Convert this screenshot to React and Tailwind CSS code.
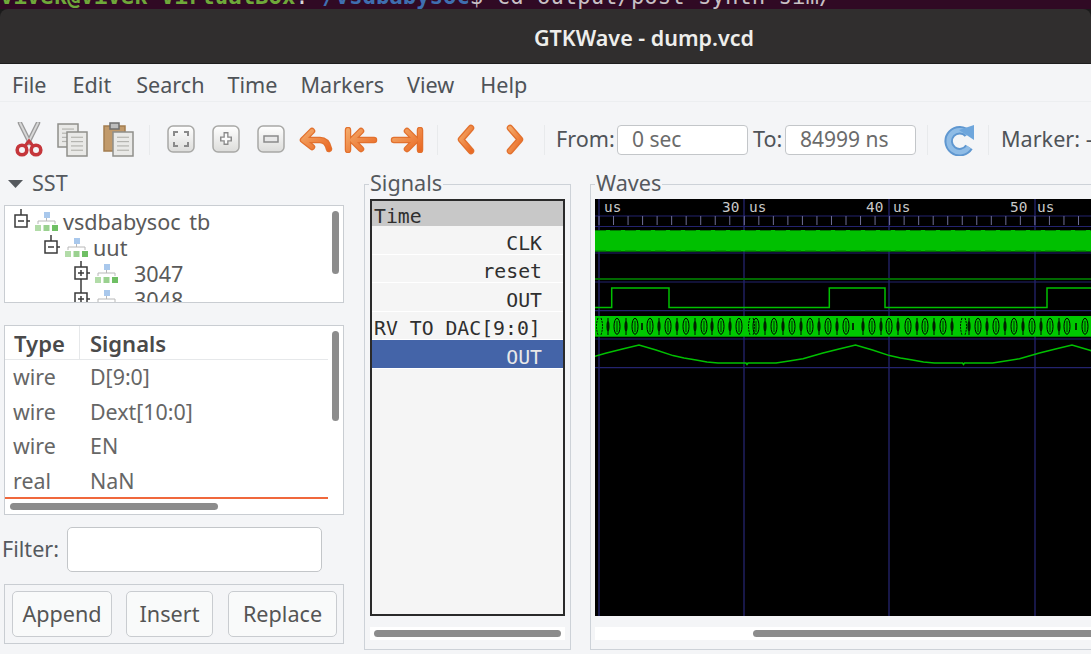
import React from "react";

const periodOffsets = [[0,345],[17,350],[34,355.6],[45,358],[57,360],[68,362],[79,363],[107,363],[108,364.5],[109,363],[137,363],[150,361],[164,358.7],[184,353],[200,349],[216.5,345]];
const analogPoints = [422.5, 639, 855.5, 1072]
  .flatMap((p) => periodOffsets.map(([o, y]) => `${p + o},${y}`))
  .join(" ");
const majors = [599, 744, 889, 1035];
const ticks = Array.from({ length: 35 }, (_, i) => 599 + i * 14.53);
const rowLines = [216, 226.5, 253, 282, 310.7, 339, 367.7];

const wideBits = [617, 635, 650, 668, 686, 704, 721, 739, 756, 774, 792, 810, 828, 846, 872, 889, 908, 925, 943, 978, 996, 1014, 1032, 1050, 1067, 1085];
const narrowBits = [608, 626, 659, 677, 695, 712, 730, 765, 783, 801, 819, 837, 863, 881, 898, 917, 934, 952, 969, 987, 1005, 1023, 1041, 1059];
const tinyBits = [642, 853, 1076];
const oddBits = [598, 750, 962];

function Tree({ sign, bottom }) {
  return (
    <svg width="18" height="26" viewBox="0 0 18 26" className="shrink-0">
      <g stroke="#3a3a3a" strokeWidth="1.5" fill="none">
        <path d="M8 0V6" />
        {bottom && <path d="M8 18V26" />}
        <rect x="2" y="6" width="12" height="12" fill="#fff" />
        <path d="M14 12H17" />
        <path d="M5 12H11" />
        {sign === "+" && <path d="M8 9V15" />}
      </g>
    </svg>
  );
}

function Hier() {
  return (
    <svg width="25" height="24" viewBox="0 0 25 24" className="shrink-0">
      <rect x="10" y="2" width="6" height="6" fill="#a9c8ec" />
      <path d="M4 14V11H21V14M12.5 8V11" stroke="#b8b8b8" fill="none" />
      <rect x="1" y="15" width="6" height="6" fill="#b2dca8" />
      <rect x="9.5" y="15" width="6" height="6" fill="#9ad18f" />
      <rect x="18" y="15" width="6" height="6" fill="#6fbf64" />
    </svg>
  );
}

function Scissors() {
  return (
    <svg width="28" height="35" viewBox="0 0 28 35">
      <path d="M5 1L15 21M23 1L13 21" stroke="#9a9a9a" strokeWidth="4.5" strokeLinecap="round" />
      <path d="M5 1L15 21M23 1L13 21" stroke="#d8d8d8" strokeWidth="1.8" strokeLinecap="round" />
      <circle cx="7" cy="28" r="4.8" fill="none" stroke="#c5363b" strokeWidth="3.6" />
      <circle cx="21" cy="28" r="4.8" fill="none" stroke="#c5363b" strokeWidth="3.6" />
      <path d="M10 24L14 19L18 24" fill="none" stroke="#c5363b" strokeWidth="3" />
    </svg>
  );
}

function Doc({ x, y, w, h }) {
  return (
    <g>
      <rect x={x} y={y} width={w} height={h} fill="#e9e9e7" stroke="#8f8f8b" strokeWidth="1.5" />
      {[0.22, 0.4, 0.58, 0.76].map((f) => (
        <path key={f} d={`M${x + 4} ${y + h * f}H${x + w - 4}`} stroke="#b4b4b0" strokeWidth="1.2" />
      ))}
    </g>
  );
}

function Copy() {
  return (
    <svg width="31" height="34" viewBox="0 0 31 34">
      <Doc x={1} y={1} w={20} h={23} />
      <Doc x={10} y={9} w={20} h={24} />
    </svg>
  );
}

function Paste() {
  return (
    <svg width="31" height="35" viewBox="0 0 31 35">
      <rect x="1" y="4" width="21" height="25" fill="#c19a6b" stroke="#a37d50" strokeWidth="1.5" />
      <rect x="7" y="1" width="9" height="6" fill="#bdbdbd" stroke="#6f6f6f" strokeWidth="1.5" />
      <Doc x={10} y={10} w={20} h={24} />
    </svg>
  );
}

function SquareBtn({ children }) {
  return (
    <svg width="28" height="29" viewBox="0 0 28 29">
      <defs>
        <linearGradient id="sq" x1="0" y1="0" x2="0" y2="1">
          <stop offset="0" stopColor="#ffffff" />
          <stop offset="1" stopColor="#dcdcda" />
        </linearGradient>
      </defs>
      <rect x="1" y="1" width="26" height="26" rx="5" fill="url(#sq)" stroke="#a8a8a6" strokeWidth="1.5" />
      {children}
    </svg>
  );
}

function Thick({ d, w = 34, h = 26 }) {
  return (
    <svg width={w} height={h} viewBox={`0 0 ${w} ${h}`}>
      <defs>
        <linearGradient id="org" x1="0" y1="0" x2="1" y2="1">
          <stop offset="0" stopColor="#f3a868" />
          <stop offset="1" stopColor="#ea6a25" />
        </linearGradient>
      </defs>
      <path d={d} fill="none" stroke="#e2712e" strokeWidth="6.5" strokeLinecap="round" strokeLinejoin="round" />
      <path d={d} fill="none" stroke="url(#org)" strokeWidth="4" strokeLinecap="round" strokeLinejoin="round" />
    </svg>
  );
}

function Reload() {
  return (
    <svg width="31" height="32" viewBox="0 0 31 32">
      <path d="M24 10A11 11 0 1 0 25 23" fill="none" stroke="#5f97d0" strokeWidth="8.5" />
      <path d="M24 10A11 11 0 1 0 25 23" fill="none" stroke="#8fbce6" strokeWidth="4.5" />
      <path d="M15 6L30 1V16Z" fill="#6ea6dc" />
    </svg>
  );
}

function Sep() {
  return <div className="w-px h-[30px] bg-[#e8eaec] shrink-0" />;
}

function TimeInput({ value }) {
  return (
    <div className="w-[131px] h-[30px] shrink-0 rounded-[4px] border border-[#c3c6c9] bg-white pl-[14px] text-[21px] leading-[27px] text-[#6b6b6b]">
      {value}
    </div>
  );
}

function ScrollThumb({ className }) {
  return <div className={`rounded-full bg-[#8c8c8c] ${className}`} />;
}

function SignalRow({ children, left, selected }) {
  return (
    <div
      className={`h-[28.5px] shrink-0 border-b border-white flex items-center pt-[8px] ${left ? "pl-[2px]" : "justify-end pr-[21px]"} ${selected ? "bg-[#4464a8] text-[#e8e8e8]" : "text-[#2f2f2f]"}`}
    >
      {children}
    </div>
  );
}

function Btn({ w, children }) {
  return (
    <div className={`${w} h-[46px] rounded-[5px] border border-[#c9ccd0] bg-[#f9fafa] flex items-center justify-center text-[21.6px] text-[#555555]`}>
      {children}
    </div>
  );
}

function ListRow({ type, name }) {
  return (
    <div className="h-[34.6px] flex items-center text-[21.4px] text-[#666666]">
      <span className="w-[75px] pl-[8px]">{type}</span>
      <span className="pl-[10px]">{name}</span>
    </div>
  );
}

export default function App() {
  return (
    <div className="w-[1091px] h-[654px] overflow-hidden flex flex-col bg-[#1a1a1a] font-['Noto_Sans',sans-serif]">
      <div className="h-[9px] shrink-0 bg-[#300a24] overflow-hidden flex items-start font-['DejaVu_Sans_Mono',monospace] text-[22.3px] leading-[20px] whitespace-pre">
        <div className="flex mt-[-14px]">
          <span className="font-bold text-[#6fa83a]">vivek@vivek-VirtualBox</span>
          <span className="text-[#d8d8d8]">:</span>
          <span className="font-bold text-[#3f6fb0]">~/vsdbabysoc</span>
          <span className="text-[#c8c0c4]">$ cd output/post_synth_sim/</span>
        </div>
      </div>

      <div className="h-[55px] shrink-0 rounded-t-[8px] bg-[#302e2e] border-b border-[#1e1e1e] flex items-center justify-center pl-[197px] pt-[4px] text-[21.5px] font-semibold text-[#eeeeec]">
        GTKWave - dump.vcd
      </div>

      <div className="flex-1 min-h-0 bg-[#f4f5f7] flex flex-col">
        <div className="h-[38px] shrink-0 border-b border-[#eceef0] flex items-center pl-[12px] pt-[5px] text-[21.6px] text-[#4f5358]">
          <span>File</span>
          <span className="ml-[26px]">Edit</span>
          <span className="ml-[25px]">Search</span>
          <span className="ml-[23px]">Time</span>
          <span className="ml-[23px]">Markers</span>
          <span className="ml-[23px]">View</span>
          <span className="ml-[26px]">Help</span>
        </div>

        <div className="h-[66px] shrink-0 flex items-center pl-[15px] pt-[9px] whitespace-nowrap text-[21.6px] text-[#4f5358] [&>*]:shrink-0">
          <Scissors />
          <div className="ml-[14px]"><Copy /></div>
          <div className="ml-[15px]"><Paste /></div>
          <div className="ml-[15px]"><Sep /></div>
          <div className="ml-[17px]">
            <SquareBtn>
              <path d="M11 7H7V11M17 7H21V11M7 17V21H11M21 17V21H17" fill="none" stroke="#8a8a8a" strokeWidth="2" />
            </SquareBtn>
          </div>
          <div className="ml-[17px]">
            <SquareBtn>
              <path d="M14 7V20M8 14H20" stroke="#8a8a8a" strokeWidth="5" />
              <path d="M14 8.5V18.5M9.5 14H18.5" stroke="#fbfbfb" strokeWidth="2.4" />
            </SquareBtn>
          </div>
          <div className="ml-[17px]">
            <SquareBtn>
              <rect x="7" y="11" width="14" height="6" fill="#e8e8e8" stroke="#8a8a8a" strokeWidth="1.5" />
            </SquareBtn>
          </div>
          <div className="ml-[14px]"><Thick d="M4 13L13 4M4 13L13 20M5 13H21Q28 13 30 22" /></div>
          <div className="ml-[11px]"><Thick d="M4 3V23M8 13L17 4M8 13L17 22M8 13H30" /></div>
          <div className="ml-[12px]"><Thick d="M30 3V23M26 13L17 4M26 13L17 22M26 13H4" /></div>
          <div className="ml-[13px]"><Sep /></div>
          <div className="ml-[18px]"><Thick w={19} h={31} d="M15 4L5 15.5L15 27" /></div>
          <div className="ml-[31px]"><Thick w={19} h={31} d="M4 4L14 15.5L4 27" /></div>
          <div className="ml-[19px]"><Sep /></div>
          <span className="ml-[11px] w-[61px]">From:</span>
          <TimeInput value="0 sec" />
          <span className="ml-[5px] w-[32px]">To:</span>
          <TimeInput value="84999 ns" />
          <div className="ml-[11px]"><Sep /></div>
          <div className="ml-[16px]"><Reload /></div>
          <div className="ml-[13px]"><Sep /></div>
          <span className="ml-[12px]">Marker: --</span>
        </div>

        <div className="flex-1 min-h-0 flex pl-[4px]">
          <div className="w-[340px] shrink-0 flex flex-col">
            <div className="h-[37px] shrink-0 flex items-center pl-[4px] pb-[6px] text-[21.6px] text-[#55595e]">
              <svg width="15" height="8" viewBox="0 0 15 8"><path d="M0 0H15L7.5 8Z" fill="#55595e" /></svg>
              <span className="ml-[9px]">SST</span>
            </div>
            <div className="h-[98px] shrink-0 border border-[#c9cdd2] bg-white relative overflow-hidden text-[21.6px] text-[#5a5a5a] leading-none pt-[3px]">
              <div className="h-[26px] flex items-center pl-[8px]">
                <Tree sign="-" />
                <div className="ml-[3px]"><Hier /></div>
                <span className="ml-[4px] [word-spacing:3px]">vsdbabysoc tb</span>
              </div>
              <div className="h-[26px] flex items-center pl-[38px]">
                <Tree sign="-" />
                <div className="ml-[3px]"><Hier /></div>
                <span className="ml-[4px]">uut</span>
              </div>
              <div className="h-[26px] flex items-center pl-[68px]">
                <Tree sign="+" bottom />
                <div className="ml-[3px]"><Hier /></div>
                <span className="ml-[15px]">3047</span>
              </div>
              <div className="h-[26px] flex items-center pl-[68px]">
                <Tree sign="+" bottom />
                <div className="ml-[3px]"><Hier /></div>
                <span className="ml-[15px]">3048</span>
              </div>
              <ScrollThumb className="absolute right-[4px] top-[5px] w-[7px] h-[63px]" />
            </div>

            <div className="mt-[22px] h-[190px] shrink-0 border border-[#c9cdd2] bg-white relative overflow-hidden">
              <div className="h-[34px] w-[323px] border-b border-[#e6e8ea] flex items-center text-[22px] font-semibold text-[#4a4a4a]">
                <span className="w-[75px] h-full pl-[9px] pt-[2px] border-r border-[#e6e8ea] flex items-center">Type</span>
                <span className="pl-[10px] pt-[2px]">Signals</span>
              </div>
              <div className="w-[323px]">
                <ListRow type="wire" name="D[9:0]" />
                <ListRow type="wire" name="Dext[10:0]" />
                <ListRow type="wire" name="EN" />
                <ListRow type="real" name="NaN" />
              </div>
              <div className="w-[323px] h-[2px] mt-[-1px] bg-[#f0683c]" />
              <ScrollThumb className="ml-[5px] mt-[4px] w-[208px] h-[7px]" />
              <ScrollThumb className="absolute right-[4px] top-[5px] w-[7px] h-[90px]" />
            </div>

            <div className="mt-[12px] h-[45px] shrink-0 flex items-center ml-[-2px] text-[21.6px] text-[#55595e]">
              <span className="w-[65px]">Filter:</span>
              <div className="w-[255px] h-[45px] rounded-[5px] border border-[#c3c6c9] bg-white" />
            </div>

            <div className="mt-[12px] h-[60px] shrink-0 border border-[#c9cdd2] flex items-center pl-[7px] gap-[14px]">
              <Btn w="w-[100px]">Append</Btn>
              <Btn w="w-[87px]">Insert</Btn>
              <div className="ml-px"><Btn w="w-[109px]">Replace</Btn></div>
            </div>
          </div>

          <div className="ml-[20px] mt-[16px] mb-[4px] w-[207px] shrink-0 border border-[#cdd2d8] relative pt-[14px] pl-[5px] pr-[5px]">
            <span className="absolute left-[4px] top-[-15px] bg-[#f4f5f7] px-[1px] text-[21.6px] leading-[26px] text-[#55595e]">Signals</span>
            <div className="h-[417px] border-2 border-[#2a2a2a] bg-[#f5f5f5] flex flex-col font-['DejaVu_Sans_Mono',monospace] text-[19.8px] leading-none">
              <div className="h-[25px] shrink-0 bg-[#c8c8c8] flex items-center pl-[2px] pt-[6px] text-[#2f2f2f]">Time</div>
              <SignalRow>CLK</SignalRow>
              <SignalRow>reset</SignalRow>
              <SignalRow>OUT</SignalRow>
              <SignalRow left>RV TO DAC[9:0]</SignalRow>
              <SignalRow selected>OUT</SignalRow>
            </div>
            <div className="mt-[11px] h-[13px] bg-white flex items-center px-[4px]">
              <ScrollThumb className="w-full h-[7px]" />
            </div>
          </div>

          <div className="ml-[19px] mt-[16px] mb-[4px] w-[520px] shrink-0 border border-[#cdd2d8] relative pt-[14px] pl-[4px]">
            <span className="absolute left-[4px] top-[-15px] bg-[#f4f5f7] px-[1px] text-[21.6px] leading-[26px] text-[#55595e]">Waves</span>
            <svg width="496" height="417" viewBox="595 199 496 417" className="block bg-black">
              {rowLines.map((y) => (
                <path key={y} d={`M595 ${y}H1091`} stroke="#23236e" strokeWidth="1.2" />
              ))}
              {majors.map((x) => (
                <path key={x} d={`M${x} 199V616`} stroke="#24246e" strokeWidth="1.3" />
              ))}
              {ticks.map((x, i) => (
                <path key={i} d={`M${x} 216V225`} stroke="#6e6e96" strokeWidth="1" />
              ))}
              <g fontFamily="'DejaVu Sans Mono', monospace" fontSize="14.4" fill="#c9c9c9">
                <text x="604" y="212">us</text>
                <text x="722" y="212">30</text>
                <text x="749" y="212">us</text>
                <text x="866" y="212">40</text>
                <text x="893" y="212">us</text>
                <text x="1010" y="212">50</text>
                <text x="1037" y="212">us</text>
              </g>
              <rect x="595" y="230" width="496" height="21.5" fill="#00c000" />
              <path d="M595 230.5H1091M595 251H1091" stroke="#007a00" strokeWidth="1" strokeDasharray="11 4" />
              <path d="M595 279H1091" stroke="#006800" strokeWidth="1.8" />
              <path d="M595 307.5H611.7V288H669V307.5H829.3V288H885V307.5H1047V288H1091" fill="none" stroke="#00c000" strokeWidth="1.5" />
              <rect x="595" y="316" width="496" height="20.7" fill="#00c800" />
              {wideBits.map((x) => (
                <g key={x}>
                  <ellipse cx={x} cy="326.3" rx="3" ry="8" fill="none" stroke="#000000" strokeWidth="1" />
                  <path d={`M${x} 321V332`} stroke="#003000" strokeWidth="1" />
                </g>
              ))}
              {narrowBits.map((x) => (
                <g key={x}>
                  <ellipse cx={x} cy="326.3" rx="1.7" ry="5" fill="#004000" />
                  <path d={`M${x} 318V335`} stroke="#000000" strokeWidth="1" />
                </g>
              ))}
              {tinyBits.map((x) => (
                <path key={x} d={`M${x} 323V330`} stroke="#000000" strokeWidth="1.5" />
              ))}
              {oddBits.map((x) => (
                <path key={x} d={`M${x} 318Q${x - 3} 326 ${x} 335M${x + 3} 318Q${x + 6} 326 ${x + 3} 335`} fill="none" stroke="#000000" strokeWidth="1" strokeDasharray="2 1" />
              ))}
              <polyline points={analogPoints} fill="none" stroke="#00c000" strokeWidth="1.5" />
            </svg>
            <div className="mt-[11px] h-[13px] bg-white flex items-center pl-[158px]">
              <ScrollThumb className="w-full h-[7px] rounded-r-none" />
            </div>
          </div>
        </div>
      </div>
    </div>
  );
}
